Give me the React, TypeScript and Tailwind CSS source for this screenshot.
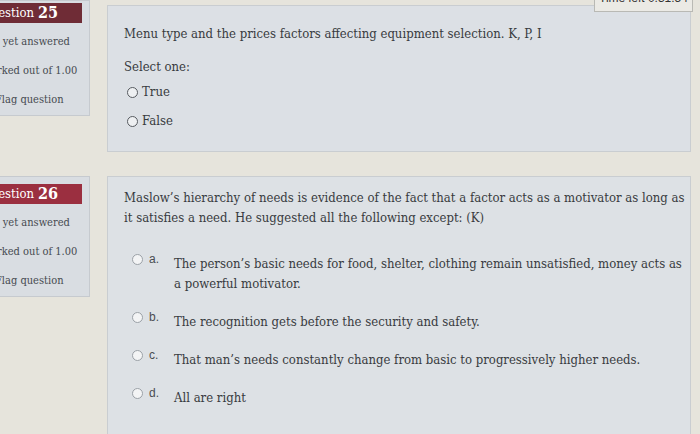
import React from 'react';

const serif = "font-['DejaVu_Serif_Condensed','DejaVu_Serif',serif]";

function Radio({ light = false }: { light?: boolean }) {
  return (
    <span
      className={`inline-block h-[11px] w-[11px] shrink-0 rounded-full border-[1.5px] ${
        light ? 'border-[#9ba1a7] bg-[#f3f4f5]' : 'border-[#575b60] bg-[#eef0f2]'
      }`}
    />
  );
}

function InfoBox({ num, headerBg, pad }: { num: number; headerBg: string; pad: string }) {
  return (
    <div className={`-ml-[22px] w-[112px] shrink-0 border border-[#c6cacf] bg-[#d9dde2] pr-[7px] ${pad} pb-[1px]`}>
      <div className={`flex h-[20px] items-center pl-[2px] text-white ${headerBg}`}>
        <span className="text-[13px]">Question</span>
        <span className="ml-[4px] text-[16px] font-bold">{num}</span>
      </div>
      <div className="mt-[4px] pl-[2px] text-[11px] leading-[29px] text-[#464a50]">
        <div>Not yet answered</div>
        <div>Marked out of 1.00</div>
        {/* flag icon space is off screen */}
        <div className="pl-[14px]">Flag question</div>
      </div>
    </div>
  );
}

const options = [
  {
    key: 'a.',
    text: "The person’s basic needs for food, shelter, clothing remain unsatisfied, money acts as a powerful motivator.",
  },
  { key: 'b.', text: 'The recognition gets before the security and safety.' },
  { key: 'c.', text: 'That man’s needs constantly change from basic to progressively higher needs.' },
  { key: 'd.', text: 'All are right' },
];

export default function App() {
  return (
    <div className={`relative h-[434px] w-[700px] overflow-hidden bg-[#e6e4dc] text-[#383b40] ${serif}`}>
      {/* timer, fixed at top */}
      <div className="absolute left-[594px] top-[-12px] flex h-[24px] w-[99px] items-end justify-center border border-[#b9b9b4] bg-[#ebeae5] pb-[4px] font-['Liberation_Sans',sans-serif] text-[12px] text-[#333]">
        Time left 0:31:54
      </div>

      <div className="flex flex-col gap-[24px]">
        {/* Question 25 */}
        <div className="flex items-start gap-[17px]">
          <InfoBox num={25} headerBg="bg-[#6f2c36]" pad="pt-[2px]" />
          <div className="mt-[5px] w-[584px] border border-[#c9cdd1] bg-[#dce0e5] pb-[20px] pl-[16px] pt-[18px]">
            <p className="text-[13px] leading-[20px]">Menu type and the prices factors affecting equipment selection. K, P, I</p>
            <p className="mt-[13px] text-[13px] leading-[20px]">Select one:</p>
            <div className="mt-[5px] flex flex-col gap-[9px] pl-[3px] text-[13px] leading-[20px]">
              <label className="flex items-center gap-[4px]">
                <Radio />
                <span>True</span>
              </label>
              <label className="flex items-center gap-[4px]">
                <Radio />
                <span>False</span>
              </label>
            </div>
          </div>
        </div>

        {/* Question 26 */}
        <div className="flex items-start gap-[17px]">
          <InfoBox num={26} headerBg="bg-[#9b2f40]" pad="pt-[7px]" />
          <div className="h-[300px] w-[584px] border border-[#c9cdd1] bg-[#dde1e5] pl-[16px] pt-[11px]">
            <p className="w-[570px] text-[13px] leading-[20px]">
              Maslow’s hierarchy of needs is evidence of the fact that a factor acts as a motivator as long as it
              satisfies a need. He suggested all the following except: (K)
            </p>
            <div className="mt-[21px] flex flex-col gap-[13px] pl-[8px]">
              {options.map((o) => (
                <div key={o.key} className="flex items-start">
                  <div className="flex w-[42px] shrink-0 items-center gap-[6px] leading-[20px]">
                    <Radio light />
                    <span className="font-['Liberation_Sans',sans-serif] text-[12px] text-[#4a4d52]">{o.key}</span>
                  </div>
                  <p className="mt-[5px] max-w-[520px] text-[13px] leading-[20px]">{o.text}</p>
                </div>
              ))}
            </div>
          </div>
        </div>
      </div>
    </div>
  );
}
